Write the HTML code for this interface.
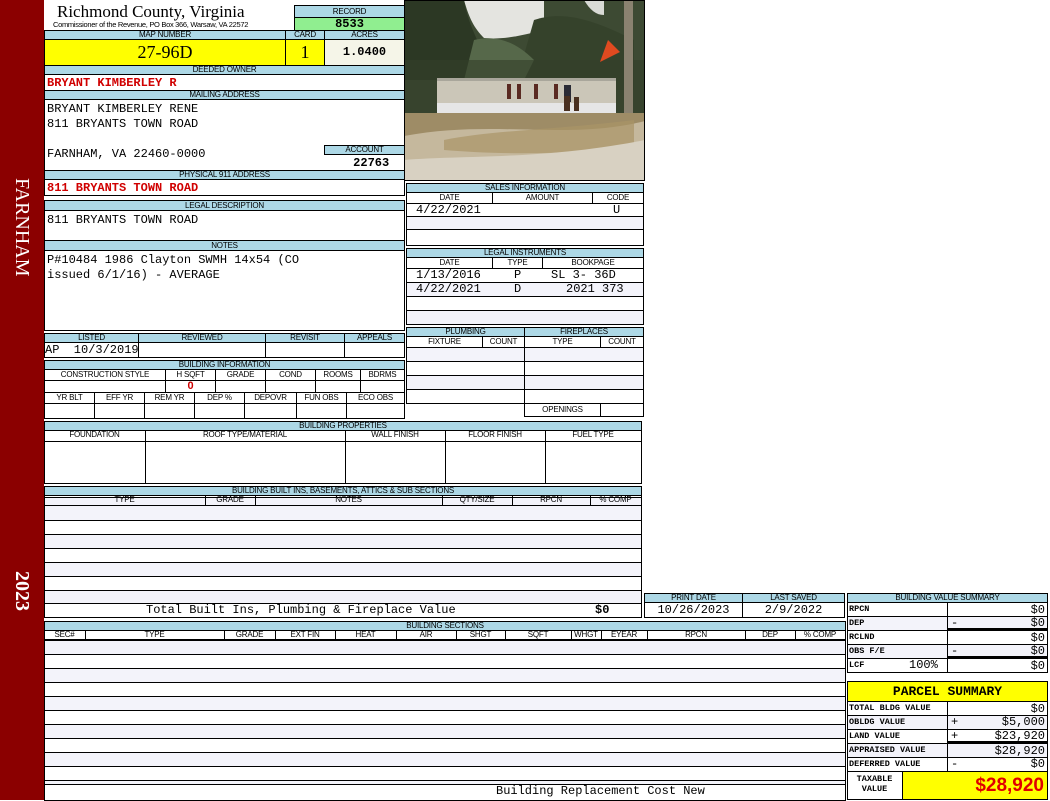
<!DOCTYPE html>
<html><head><meta charset="utf-8"><style>
*{margin:0;padding:0;box-sizing:border-box}
body{width:1050px;height:800px;background:#fff;position:relative;overflow:hidden;font-family:"Liberation Sans",sans-serif}
.a{position:absolute}
.c{position:absolute;border:1px solid #000;overflow:hidden;white-space:nowrap}
.h{background:#add8e6;font-size:8px;line-height:8px;text-align:center;color:#000;letter-spacing:-0.2px}
.m{font-family:"Liberation Mono",monospace;font-size:12px;color:#000}
.r{color:#d00000;font-weight:bold}
.rows{background:repeating-linear-gradient(#f3f3fa 0 13px,#000 13px 14px,#fff 14px 27px,#000 27px 28px)}
.rows2{background:repeating-linear-gradient(#fff 0 13px,#000 13px 14px,#f3f3fa 14px 27px,#000 27px 28px)}
.vl{position:absolute;top:0;bottom:0;width:1px;background:#000}
.sm{font-family:"Liberation Mono",monospace;font-size:8.5px;font-weight:bold;line-height:13px;padding-left:1px}
.v{font-family:"Liberation Mono",monospace;font-size:12px;position:absolute;width:97px;text-align:right;line-height:14px}
.mi{position:absolute;left:951px;font-family:"Liberation Mono",monospace;font-size:12px;line-height:14px}
</style></head><body>
<div class="a" style="left:0;top:0;width:44px;height:800px;background:#8b0000"></div>
<div class="a" style="left:33px;top:178px;transform-origin:0 0;transform:rotate(90deg);color:#fff;font:20px 'Liberation Serif',serif;white-space:nowrap">FARNHAM</div>
<div class="a" style="left:33px;top:571px;transform-origin:0 0;transform:rotate(90deg);color:#fff;font:bold 20px 'Liberation Serif',serif">2023</div>

<div class="a" style="left:57px;top:2px;font:17px 'Liberation Serif',serif">Richmond County, Virginia</div>
<div class="a" style="left:53px;top:20px;font-size:7.5px;letter-spacing:-0.3px">Commissioner of the Revenue, PO Box 366, Warsaw, VA 22572</div>
<div class="c h" style="left:294px;top:5px;width:111px;height:13px;line-height:11px">RECORD</div>
<div class="c m" style="left:294px;top:17px;width:111px;height:14px;background:#90ee90;text-align:center;font-weight:bold;line-height:12px">8533</div>
<div class="c h" style="left:44px;top:30px;width:242px;height:10px">MAP NUMBER</div>
<div class="c h" style="left:285px;top:30px;width:40px;height:10px">CARD</div>
<div class="c h" style="left:324px;top:30px;width:81px;height:10px">ACRES</div>
<div class="c" style="left:44px;top:39px;width:242px;height:27px;background:#ffff00;text-align:center;font:18px/25px 'Liberation Serif',serif">27-96D</div>
<div class="c" style="left:285px;top:39px;width:40px;height:27px;background:#ffff00;text-align:center;font:18px/25px 'Liberation Serif',serif">1</div>
<div class="c m" style="left:324px;top:39px;width:81px;height:27px;background:#f5f5e8;text-align:center;font-weight:bold;line-height:25px;font-size:12px">1.0400</div>
<div class="c h" style="left:44px;top:65px;width:361px;height:10px">DEEDED OWNER</div>
<div class="c m r" style="left:44px;top:74px;width:361px;height:17px;line-height:17px;padding-left:2px">BRYANT KIMBERLEY R</div>
<div class="c h" style="left:44px;top:90px;width:361px;height:10px">MAILING ADDRESS</div>
<div class="c m" style="left:44px;top:99px;width:361px;height:72px;padding:2px 0 0 2px;line-height:15px;white-space:pre">BRYANT KIMBERLEY RENE
811 BRYANTS TOWN ROAD

FARNHAM, VA 22460-0000</div>
<div class="c h" style="left:324px;top:145px;width:81px;height:10px">ACCOUNT</div>
<div class="a m" style="left:324px;top:156px;width:80px;text-align:center;font-weight:bold;line-height:14px">&nbsp;&nbsp;22763</div>
<div class="c h" style="left:44px;top:170px;width:361px;height:10px">PHYSICAL 911 ADDRESS</div>
<div class="c m r" style="left:44px;top:179px;width:361px;height:17px;line-height:17px;padding-left:2px">811 BRYANTS TOWN ROAD</div>
<div class="c h" style="left:44px;top:200px;width:361px;height:11px;line-height:9px">LEGAL DESCRIPTION</div>
<div class="c m" style="left:44px;top:210px;width:361px;height:31px;padding:2px 0 0 2px">811 BRYANTS TOWN ROAD</div>
<div class="c h" style="left:44px;top:240px;width:361px;height:11px;line-height:9px">NOTES</div>
<div class="c m" style="left:44px;top:250px;width:361px;height:81px;padding:2px 0 0 2px;line-height:15px;white-space:pre">P#10484 1986 Clayton SWMH 14x54 (CO
issued 6/1/16) - AVERAGE</div>

<div class="c h" style="left:44px;top:333px;width:95px;height:10px">LISTED</div>
<div class="c h" style="left:138px;top:333px;width:128px;height:10px">REVIEWED</div>
<div class="c h" style="left:265px;top:333px;width:80px;height:10px">REVISIT</div>
<div class="c h" style="left:344px;top:333px;width:61px;height:10px">APPEALS</div>
<div class="c m" style="left:44px;top:342px;width:95px;height:16px;line-height:14px;white-space:pre">AP  10/3/2019</div>
<div class="c" style="left:138px;top:342px;width:128px;height:16px"></div>
<div class="c" style="left:265px;top:342px;width:80px;height:16px"></div>
<div class="c" style="left:344px;top:342px;width:61px;height:16px"></div>

<div class="c h" style="left:44px;top:360px;width:361px;height:10px">BUILDING INFORMATION</div>
<div class="c h" style="left:44px;top:369px;width:122px;height:12px;background:#fff;line-height:10px">CONSTRUCTION STYLE</div>
<div class="c h" style="left:165px;top:369px;width:51px;height:12px;background:#fff;line-height:10px">H SQFT</div>
<div class="c h" style="left:215px;top:369px;width:51px;height:12px;background:#fff;line-height:10px">GRADE</div>
<div class="c h" style="left:265px;top:369px;width:51px;height:12px;background:#fff;line-height:10px">COND</div>
<div class="c h" style="left:315px;top:369px;width:46px;height:12px;background:#fff;line-height:10px">ROOMS</div>
<div class="c h" style="left:360px;top:369px;width:45px;height:12px;background:#fff;line-height:10px">BDRMS</div>
<div class="c" style="left:44px;top:380px;width:122px;height:13px"></div>
<div class="c" style="left:165px;top:380px;width:51px;height:13px;text-align:center;color:#c00;font:bold 11px/11px 'Liberation Sans',sans-serif">0</div>
<div class="c" style="left:215px;top:380px;width:51px;height:13px"></div>
<div class="c" style="left:265px;top:380px;width:51px;height:13px"></div>
<div class="c" style="left:315px;top:380px;width:46px;height:13px"></div>
<div class="c" style="left:360px;top:380px;width:45px;height:13px"></div>
<div class="c h" style="left:44px;top:392px;width:51px;height:12px;background:#fff;line-height:10px">YR BLT</div>
<div class="c h" style="left:94px;top:392px;width:51px;height:12px;background:#fff;line-height:10px">EFF YR</div>
<div class="c h" style="left:144px;top:392px;width:51px;height:12px;background:#fff;line-height:10px">REM YR</div>
<div class="c h" style="left:194px;top:392px;width:51px;height:12px;background:#fff;line-height:10px">DEP %</div>
<div class="c h" style="left:244px;top:392px;width:53px;height:12px;background:#fff;line-height:10px">DEPOVR</div>
<div class="c h" style="left:296px;top:392px;width:51px;height:12px;background:#fff;line-height:10px">FUN OBS</div>
<div class="c h" style="left:346px;top:392px;width:59px;height:12px;background:#fff;line-height:10px">ECO OBS</div>
<div class="c" style="left:44px;top:403px;width:51px;height:16px"></div>
<div class="c" style="left:94px;top:403px;width:51px;height:16px"></div>
<div class="c" style="left:144px;top:403px;width:51px;height:16px"></div>
<div class="c" style="left:194px;top:403px;width:51px;height:16px"></div>
<div class="c" style="left:244px;top:403px;width:53px;height:16px"></div>
<div class="c" style="left:296px;top:403px;width:51px;height:16px"></div>
<div class="c" style="left:346px;top:403px;width:59px;height:16px"></div>

<svg class="a" style="left:404px;top:0" width="241" height="181" viewBox="0 0 241 181">
<rect width="241" height="181" fill="#3d4a33"/>
<path d="M60 0h80v30c-20 5-40 10-60 8-10-10-15-20-20-38z" fill="#e4e4e0"/>
<path d="M180 0h20v15c-8 0-14-5-20-15z" fill="#d9dad6"/>
<path d="M0 0h60c5 30 20 50 30 80H0z" fill="#2c3824"/>
<path d="M130 20c30-10 60 0 100 20v50H110z" fill="#35422b"/>
<path d="M70 40c20-5 40 0 60 20l-10 20H60z" fill="#56684a"/>
<rect x="0" y="60" width="241" height="55" fill="#334029" opacity=".6"/>
<rect x="33" y="78" width="179" height="36" fill="#cbc6b8"/>
<rect x="33" y="78" width="179" height="3" fill="#a9a69b"/>
<rect x="33" y="103" width="179" height="10" fill="#e6e6e6"/>
<rect x="103" y="84" width="4" height="15" fill="#5a2a22"/><rect x="113" y="84" width="4" height="15" fill="#5a2a22"/><rect x="130" y="84" width="4" height="15" fill="#5a2a22"/><rect x="150" y="84" width="4" height="15" fill="#5a2a22"/><rect x="160" y="85" width="7" height="17" fill="#2b2b35"/>
<rect x="160" y="96" width="6" height="15" fill="#4a3020"/><rect x="170" y="97" width="5" height="14" fill="#4a3020"/>
<path d="M196 62l8-22 12 12z" fill="#e04a20"/>
<rect x="220" y="0" width="9" height="118" fill="#8a8270"/>
<path d="M0 113h241v68H0z" fill="#c5b89d"/>
<path d="M0 113h241v8c-80 20-150-2-241 15z" fill="#9e8c66"/>
<path d="M40 140c50-10 110-10 190-20v25c-60 10-130 10-190 5z" fill="#a99467" opacity=".7"/>
<path d="M0 160c60-5 140 0 241-20v41H0z" fill="#d8d1c2"/>
<rect x="0.5" y="0.5" width="240" height="180" fill="none" stroke="#000"/>
</svg>

<div class="c h" style="left:406px;top:183px;width:238px;height:10px">SALES INFORMATION</div>
<div class="c" style="left:406px;top:192px;width:238px;height:54px"></div>
<div class="a" style="left:407px;top:216px;width:236px;height:14px;background:#f3f3fa;border-top:1px solid #000;border-bottom:1px solid #000"></div>
<div class="c h" style="left:406px;top:192px;width:87px;height:12px;background:#fff;line-height:10px">DATE</div>
<div class="c h" style="left:492px;top:192px;width:101px;height:12px;background:#fff;line-height:10px">AMOUNT</div>
<div class="c h" style="left:592px;top:192px;width:52px;height:12px;background:#fff;line-height:10px">CODE</div>
<div class="a m" style="left:416px;top:203px;line-height:14px">4/22/2021</div>
<div class="a m" style="left:613px;top:203px;line-height:14px">U</div>

<div class="c h" style="left:406px;top:248px;width:238px;height:10px">LEGAL INSTRUMENTS</div>
<div class="c rows2" style="left:406px;top:257px;width:238px;height:68px;background-position:0 11px"></div>
<div class="a" style="left:407px;top:268px;width:236px;height:1px;background:#000"></div>
<div class="c h" style="left:406px;top:257px;width:87px;height:12px;background:#fff;line-height:10px">DATE</div>
<div class="c h" style="left:492px;top:257px;width:51px;height:12px;background:#fff;line-height:10px">TYPE</div>
<div class="c h" style="left:542px;top:257px;width:102px;height:12px;background:#fff;line-height:10px">BOOKPAGE</div>
<div class="a m" style="left:416px;top:268px;line-height:14px">1/13/2016</div>
<div class="a m" style="left:416px;top:282px;line-height:14px">4/22/2021</div>
<div class="a m" style="left:514px;top:268px;line-height:14px">P</div>
<div class="a m" style="left:514px;top:282px;line-height:14px">D</div>
<div class="a m" style="left:551px;top:268px;line-height:14px">SL 3- 36D</div>
<div class="a m" style="left:566px;top:282px;line-height:14px">2021 373</div>

<div class="c h" style="left:406px;top:327px;width:119px;height:10px">PLUMBING</div>
<div class="c h" style="left:524px;top:327px;width:120px;height:10px">FIREPLACES</div>
<div class="c rows" style="left:406px;top:336px;width:119px;height:68px;background-position:0 11px"></div>
<div class="c rows" style="left:524px;top:336px;width:120px;height:81px;background-position:0 11px"></div>
<div class="c h" style="left:406px;top:336px;width:77px;height:12px;background:#fff;line-height:10px">FIXTURE</div>
<div class="c h" style="left:482px;top:336px;width:43px;height:12px;background:#fff;line-height:10px">COUNT</div>
<div class="c h" style="left:524px;top:336px;width:77px;height:12px;background:#fff;line-height:10px">TYPE</div>
<div class="c h" style="left:600px;top:336px;width:44px;height:12px;background:#fff;line-height:10px">COUNT</div>
<div class="c h" style="left:524px;top:403px;width:77px;height:14px;background:#fff;line-height:12px">OPENINGS</div>
<div class="c" style="left:600px;top:403px;width:44px;height:14px;background:#fff"></div>

<div class="c h" style="left:44px;top:421px;width:598px;height:10px">BUILDING PROPERTIES</div>
<div class="c" style="left:44px;top:430px;width:598px;height:54px"><div class="a" style="left:0;right:0;top:10px;height:1px;background:#000"></div>
<div class="vl" style="left:100px"></div><div class="vl" style="left:300px"></div><div class="vl" style="left:400px"></div><div class="vl" style="left:500px"></div></div>
<div class="a h" style="left:44px;top:431px;width:101px;background:none">FOUNDATION</div>
<div class="a h" style="left:145px;top:431px;width:200px;background:none">ROOF TYPE/MATERIAL</div>
<div class="a h" style="left:345px;top:431px;width:100px;background:none">WALL FINISH</div>
<div class="a h" style="left:445px;top:431px;width:100px;background:none">FLOOR FINISH</div>
<div class="a h" style="left:545px;top:431px;width:96px;background:none">FUEL TYPE</div>

<div class="c h" style="left:44px;top:486px;width:598px;height:10px">BUILDING BUILT INS, BASEMENTS, ATTICS &amp; SUB SECTIONS</div>
<div class="c rows" style="left:44px;top:495px;width:598px;height:123px;background-position:0 11px"></div>
<div class="a" style="left:45px;top:505px;width:596px;height:1px;background:#000"></div>
<div class="a" style="left:45px;top:603px;width:596px;height:14px;background:#fff;border-top:1px solid #000"></div>
<div class="a" style="left:44px;top:495px;width:598px;height:11px">
<div class="vl" style="left:161px"></div><div class="vl" style="left:211px"></div><div class="vl" style="left:398px"></div><div class="vl" style="left:468px"></div><div class="vl" style="left:546px"></div></div>
<div class="a h" style="left:44px;top:496px;width:161px;background:none">TYPE</div>
<div class="a h" style="left:205px;top:496px;width:50px;background:none">GRADE</div>
<div class="a h" style="left:255px;top:496px;width:187px;background:none">NOTES</div>
<div class="a h" style="left:442px;top:496px;width:70px;background:none">QTY/SIZE</div>
<div class="a h" style="left:512px;top:496px;width:78px;background:none">RPCN</div>
<div class="a h" style="left:590px;top:496px;width:51px;background:none">% COMP</div>
<div class="a m" style="left:146px;top:603px;line-height:15px">Total Built Ins, Plumbing &amp; Fireplace Value</div>
<div class="a m" style="left:595px;top:603px;line-height:15px;font-weight:bold">$0</div>

<div class="c h" style="left:644px;top:593px;width:99px;height:10px">PRINT DATE</div>
<div class="c h" style="left:742px;top:593px;width:103px;height:10px">LAST SAVED</div>
<div class="c m" style="left:644px;top:602px;width:99px;height:16px;text-align:center;line-height:14px">10/26/2023</div>
<div class="c m" style="left:742px;top:602px;width:103px;height:16px;text-align:center;line-height:14px">2/9/2022</div>

<div class="c h" style="left:44px;top:621px;width:802px;height:10px">BUILDING SECTIONS</div>
<div class="c rows" style="left:44px;top:630px;width:802px;height:171px;background-position:0 10px"></div>
<div class="a" style="left:45px;top:640px;width:800px;height:1px;background:#000"></div>
<div class="a" style="left:45px;top:784px;width:800px;height:16px;background:#fff;border-top:1px solid #000"></div>
<div class="a" style="left:44px;top:630px;width:802px;height:10px">
<div class="vl" style="left:41px"></div><div class="vl" style="left:180px"></div><div class="vl" style="left:231px"></div><div class="vl" style="left:291px"></div><div class="vl" style="left:352px"></div><div class="vl" style="left:412px"></div><div class="vl" style="left:461px"></div><div class="vl" style="left:527px"></div><div class="vl" style="left:557px"></div><div class="vl" style="left:603px"></div><div class="vl" style="left:701px"></div><div class="vl" style="left:751px"></div></div>
<div class="a h" style="left:44px;top:631px;width:41px;background:none">SEC#</div>
<div class="a h" style="left:85px;top:631px;width:139px;background:none">TYPE</div>
<div class="a h" style="left:224px;top:631px;width:51px;background:none">GRADE</div>
<div class="a h" style="left:275px;top:631px;width:60px;background:none">EXT FIN</div>
<div class="a h" style="left:335px;top:631px;width:61px;background:none">HEAT</div>
<div class="a h" style="left:396px;top:631px;width:60px;background:none">AIR</div>
<div class="a h" style="left:456px;top:631px;width:49px;background:none">SHGT</div>
<div class="a h" style="left:505px;top:631px;width:66px;background:none">SQFT</div>
<div class="a h" style="left:571px;top:631px;width:30px;background:none">WHGT</div>
<div class="a h" style="left:601px;top:631px;width:46px;background:none">EYEAR</div>
<div class="a h" style="left:647px;top:631px;width:98px;background:none">RPCN</div>
<div class="a h" style="left:745px;top:631px;width:50px;background:none">DEP</div>
<div class="a h" style="left:795px;top:631px;width:50px;background:none">% COMP</div>
<div class="a m" style="left:496px;top:784px;line-height:15px">Building Replacement Cost New</div>

<div class="c h" style="left:847px;top:593px;width:201px;height:10px">BUILDING VALUE SUMMARY</div>
<div class="c" style="left:847px;top:602px;width:201px;height:71px;background:repeating-linear-gradient(#fff 0 13px,#000 13px 14px,#f3f3fa 14px 27px,#000 27px 28px)"><div class="vl" style="left:99px"></div></div>
<div class="a" style="left:947px;top:628px;width:101px;height:3px;background:#000"></div>
<div class="a" style="left:947px;top:656px;width:101px;height:3px;background:#000"></div>
<div class="a sm" style="left:848px;top:603px">RPCN</div>
<div class="a sm" style="left:848px;top:617px">DEP</div>
<div class="a sm" style="left:848px;top:631px">RCLND</div>
<div class="a sm" style="left:848px;top:645px">OBS F/E</div>
<div class="a sm" style="left:848px;top:659px">LCF</div>
<div class="a m" style="left:909px;top:659px;line-height:13px">100%</div>
<div class="v" style="left:948px;top:603px">$0</div>
<div class="mi" style="top:616px">-</div><div class="v" style="left:948px;top:616px">$0</div>
<div class="v" style="left:948px;top:631px">$0</div>
<div class="mi" style="top:644px">-</div><div class="v" style="left:948px;top:644px">$0</div>
<div class="v" style="left:948px;top:659px">$0</div>

<div class="c" style="left:847px;top:681px;width:201px;height:21px;background:#ffff00;text-align:center;font:bold 13px/19px 'Liberation Mono',monospace">PARCEL SUMMARY</div>
<div class="c" style="left:847px;top:701px;width:201px;height:71px;background:repeating-linear-gradient(#fff 0 13px,#000 13px 14px,#f3f3fa 14px 27px,#000 27px 28px)"><div class="vl" style="left:99px"></div></div>
<div class="a" style="left:947px;top:741px;width:101px;height:3px;background:#000"></div>
<div class="a sm" style="left:848px;top:702px">TOTAL BLDG VALUE</div>
<div class="a sm" style="left:848px;top:716px">OBLDG VALUE</div>
<div class="a sm" style="left:848px;top:730px">LAND VALUE</div>
<div class="a sm" style="left:848px;top:744px">APPRAISED VALUE</div>
<div class="a sm" style="left:848px;top:758px">DEFERRED VALUE</div>
<div class="v" style="left:948px;top:702px">$0</div>
<div class="mi" style="top:715px">+</div><div class="v" style="left:948px;top:715px">$5,000</div>
<div class="mi" style="top:729px">+</div><div class="v" style="left:948px;top:729px">$23,920</div>
<div class="v" style="left:948px;top:744px">$28,920</div>
<div class="mi" style="top:757px">-</div><div class="v" style="left:948px;top:757px">$0</div>
<div class="c" style="left:847px;top:771px;width:201px;height:29px"></div>
<div class="a sm" style="left:848px;top:774px;width:52px;text-align:center;line-height:10px">TAXABLE<br>VALUE</div>
<div class="c" style="left:902px;top:771px;width:146px;height:29px;background:#ffff00;text-align:right;padding-right:3px;color:#e00000;font:bold 19px/27px 'Liberation Sans',sans-serif">$28,920</div>
</body></html>
